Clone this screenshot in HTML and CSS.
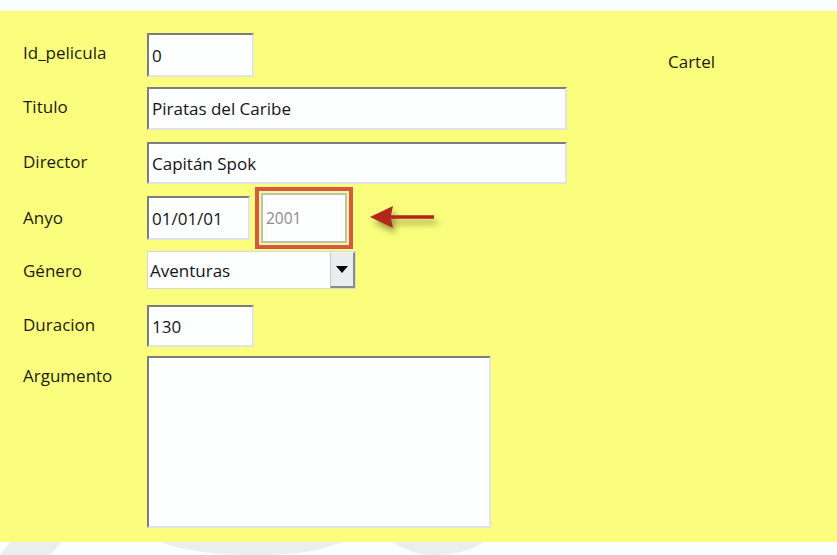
FILE: index.html
```html
<!DOCTYPE html>
<html lang="es">
<head>
<meta charset="utf-8">
<title>Pelicula</title>
<link rel="stylesheet" href="styles.css">
</head>
<body>
<div class="top-strip"></div>
<div class="panel">
  <div class="form">
    <div class="row r1">
      <div class="label">Id_pelicula</div>
      <div class="field w-short h44">0</div>
    </div>
    <div class="row r2">
      <div class="label">Titulo</div>
      <div class="field w-long h43">Piratas del Caribe</div>
    </div>
    <div class="row r3">
      <div class="label">Director</div>
      <div class="field w-long h42">Capitán Spok</div>
    </div>
    <div class="row r4 center">
      <div class="label nopad">Anyo</div>
      <div class="field w-date h44">01/01/01</div>
      <div class="highlight">
        <div class="field-light">2001</div>
      </div>
      <svg class="arrow" width="70" height="34" viewBox="0 0 70 34">
        <polygon points="0,15 23,4 21,13.2 64,13.2 64,16.8 21,16.8 23,26" fill="#b3261c"/>
      </svg>
    </div>
    <div class="row r5">
      <div class="label">Género</div>
      <div class="select">
        <span class="select-text">Aventuras</span>
        <span class="select-btn"><span class="tri"></span></span>
      </div>
    </div>
    <div class="row r6">
      <div class="label">Duracion</div>
      <div class="field w-short h42">130</div>
    </div>
    <div class="row r7">
      <div class="label">Argumento</div>
      <div class="field textarea"></div>
    </div>
  </div>
  <div class="cartel">Cartel</div>
</div>
<div class="footer">
  <svg width="837" height="13" viewBox="0 0 837 13">
    <polygon points="10,0 62,0 50,13 0,13" fill="#eaeeee"/>
    <path d="M160 0 H342 C322 8 300 13 252 13 C212 13 182 8 160 0Z" fill="#eaeeee"/>
    <path d="M392 0 H484 C472 8 456 13 432 13 C416 13 402 6 392 0Z" fill="#eaeeee"/>
  </svg>
</div>
</body>
</html>
```
FILE: styles.css
```css
html, body {
  margin: 0;
  padding: 0;
}
body {
  background: #f9fefe;
  font-family: "Open Sans", "Noto Sans", sans-serif;
  font-size: 17px;
  color: #1e1a14;
  width: 837px;
  height: 555px;
  overflow: hidden;
}
.top-strip {
  height: 11px;
}
.panel {
  height: 531px;
  background: #fafe7c;
  display: flex;
  box-sizing: border-box;
  padding-top: 22px;
}
.form {
  width: 668px;
  display: flex;
  flex-direction: column;
}
.row {
  display: flex;
  align-items: flex-start;
}
.row.center {
  align-items: center;
}
.r2 { margin-top: 10px; }
.r3 { margin-top: 12px; }
.r4 { margin-top: 3px; }
.r5 { margin-top: 2px; }
.r6 { margin-top: 16px; }
.r7 { margin-top: 9px; }
.label {
  width: 147px;
  flex: none;
  box-sizing: border-box;
  padding-left: 23px;
  padding-top: 10px;
  line-height: 20px;
}
.label.nopad {
  padding-top: 0;
}
.field {
  box-sizing: border-box;
  background: #fdfefe;
  border-top: 2px solid #7d7d7d;
  border-left: 2px solid #7d7d7d;
  border-right: 2px solid #e2e4e4;
  border-bottom: 2px solid #e2e4e4;
  padding-left: 3px;
  display: flex;
  align-items: center;
  color: #15131a;
  white-space: nowrap;
}
.w-short { width: 107px; }
.w-long { width: 420px; }
.w-date { width: 103px; }
.h44 { height: 44px; }
.h43 { height: 43px; }
.h42 { height: 42px; }
.textarea {
  width: 344px;
  height: 172px;
}
.highlight {
  margin-left: 5px;
  width: 98px;
  height: 62px;
  box-sizing: border-box;
  border: 4px solid #d8554a;
  padding: 2px;
}
.field-light {
  box-sizing: border-box;
  width: 100%;
  height: 100%;
  background: #fdfefe;
  border: 2px solid #bcc0c0;
  padding-left: 3px;
  display: flex;
  align-items: center;
  color: #8c8c8c;
  font-size: 15.5px;
}
.arrow {
  margin-left: 17px;
  margin-top: 2px;
  filter: drop-shadow(3px 5px 3px rgba(40, 40, 0, 0.45));
}
.select {
  width: 209px;
  height: 38px;
  box-sizing: border-box;
  background: #fdfefe;
  border: 1px solid #d6d8d8;
  display: flex;
  align-items: stretch;
}
.select-text {
  flex: 1;
  display: flex;
  align-items: center;
  padding-left: 2px;
  color: #15131a;
}
.select-btn {
  width: 25px;
  box-sizing: border-box;
  background: #e9eded;
  border-top: 1px solid #f4f6f6;
  border-left: 1px solid #c4c8c8;
  border-right: 2px solid #8a8c8c;
  border-bottom: 2px solid #8a8c8c;
  display: flex;
  align-items: center;
  justify-content: center;
}
.tri {
  width: 0;
  height: 0;
  border-left: 6px solid transparent;
  border-right: 6px solid transparent;
  border-top: 7px solid #000;
  margin-top: -1px;
}
.cartel {
  padding-top: 19px;
  line-height: 20px;
}
.footer {
  height: 13px;
  line-height: 0;
}
```
